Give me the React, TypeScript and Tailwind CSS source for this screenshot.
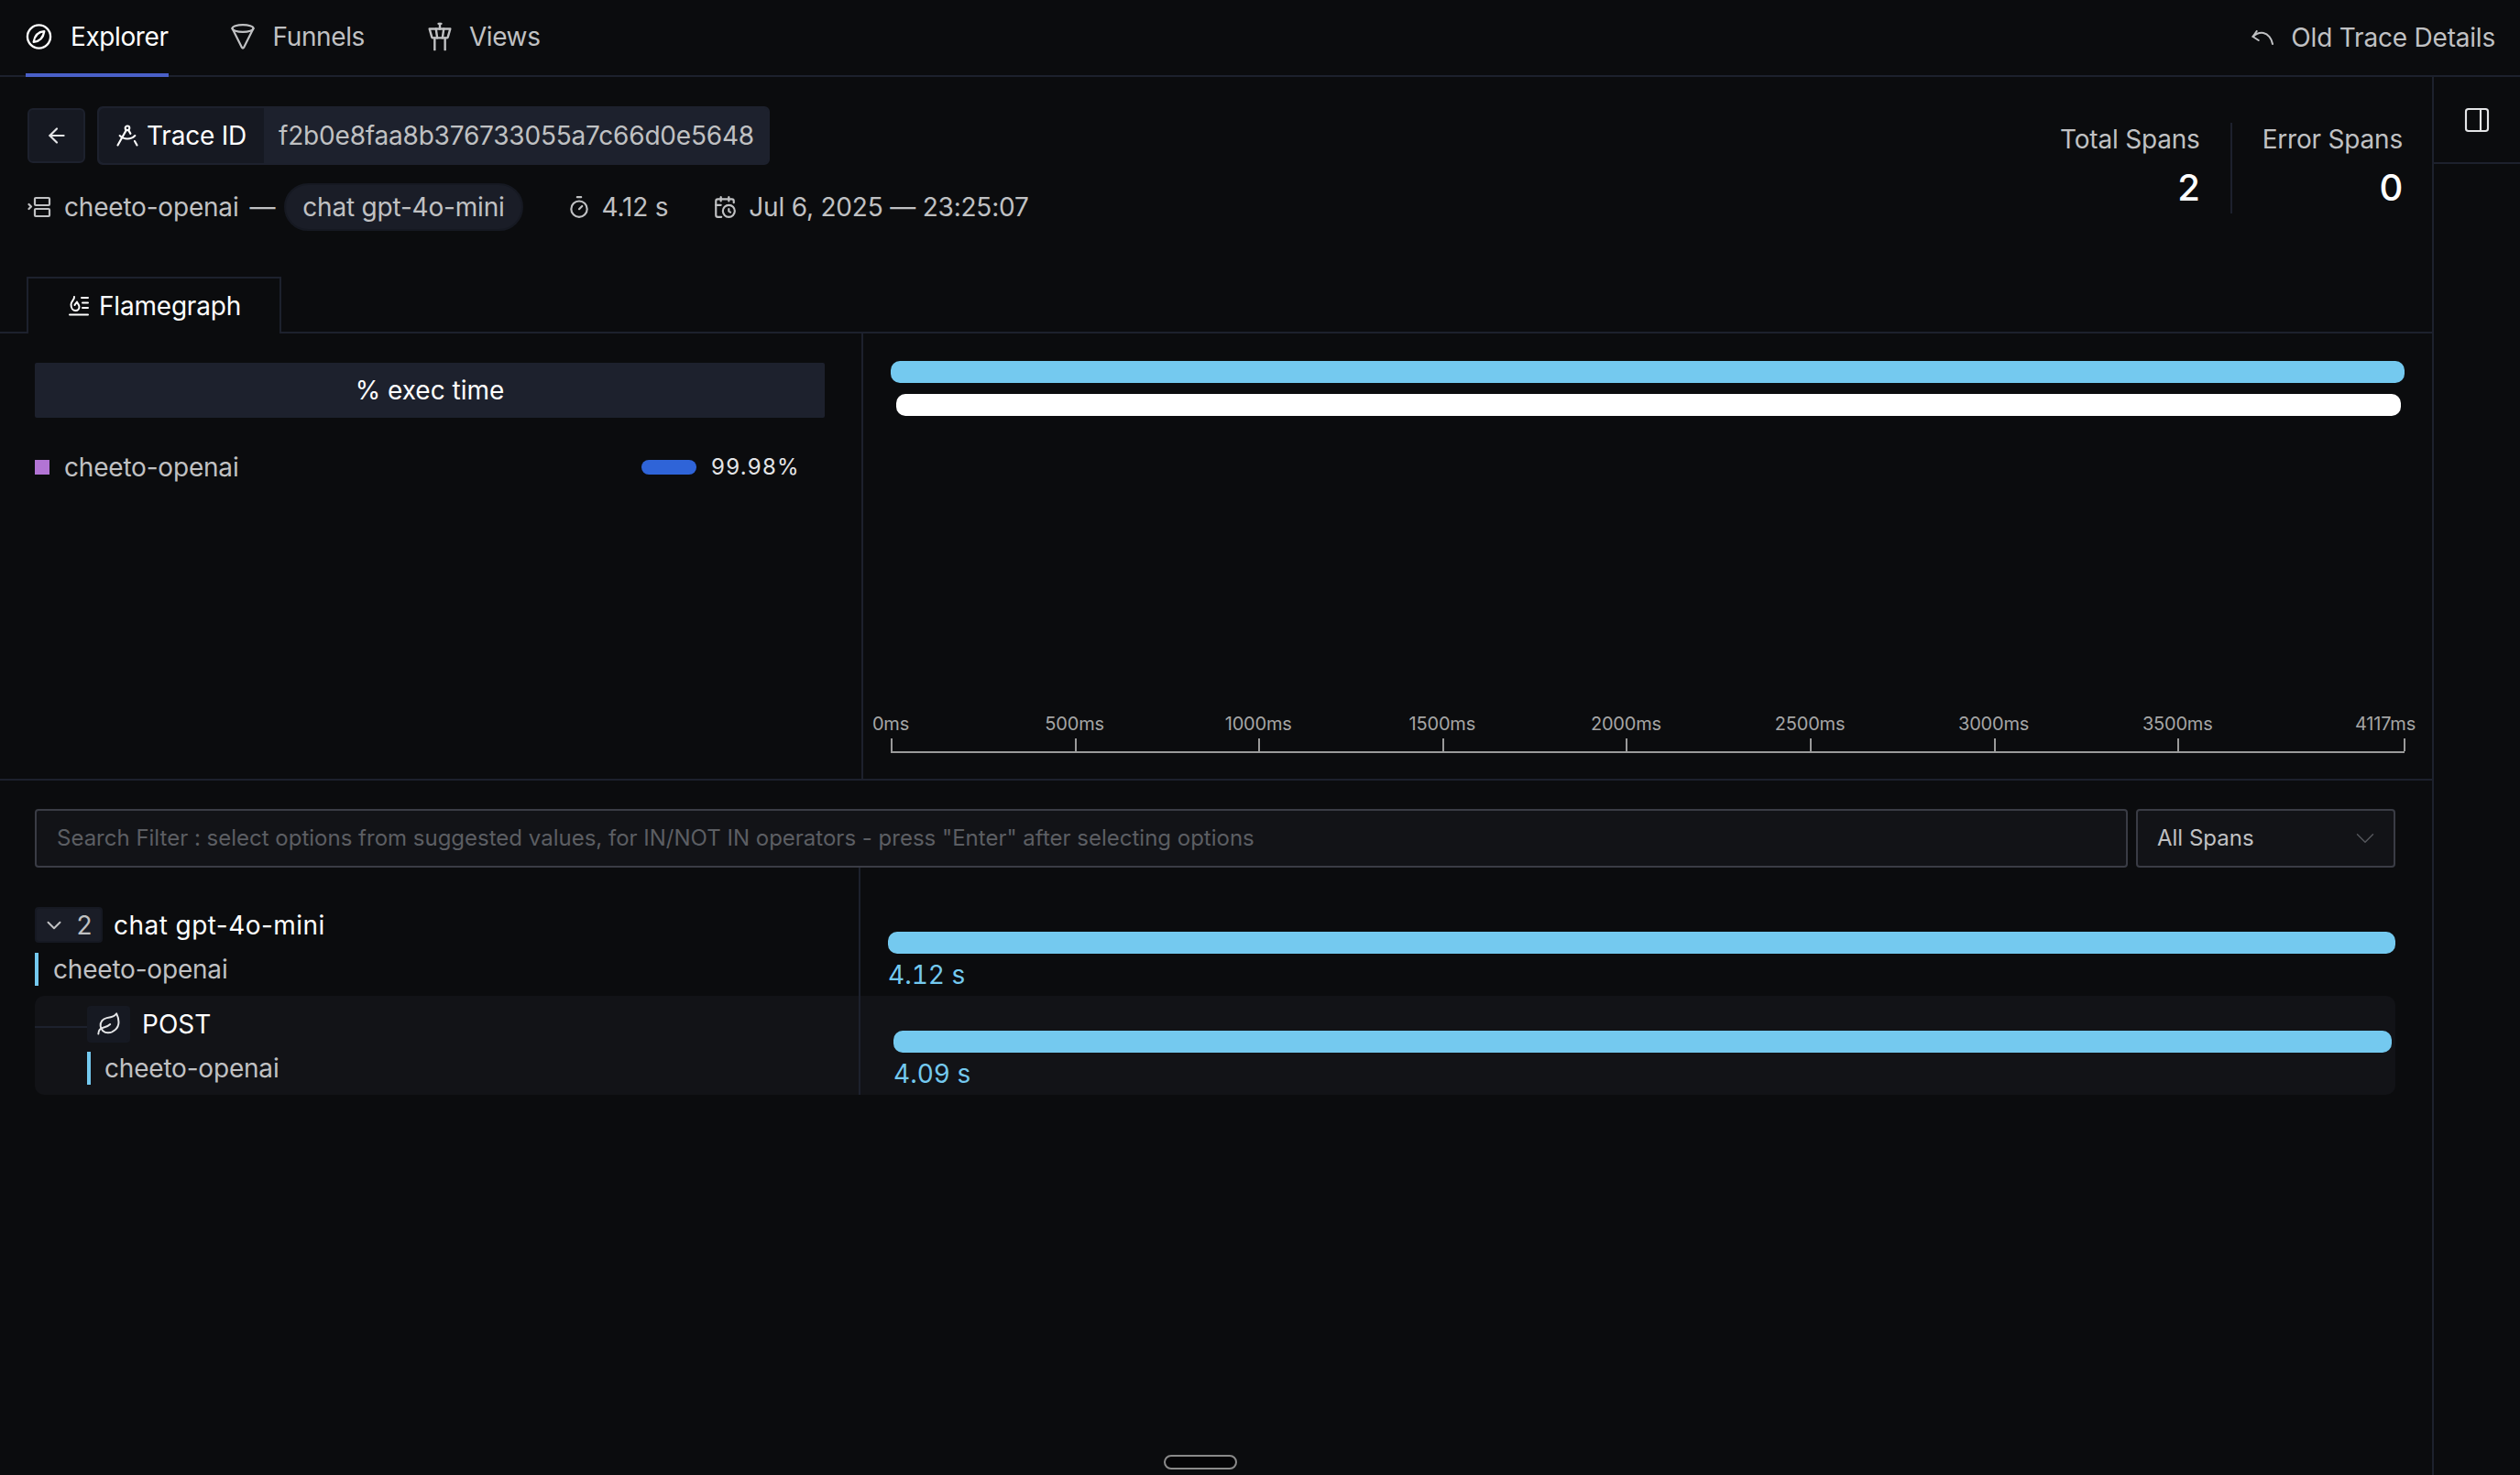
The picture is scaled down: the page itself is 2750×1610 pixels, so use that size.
import { ArrowLeft, CalendarClock, ChevronDown, DraftingCompass, Leaf, PanelRight, Timer, TowerControl } from "lucide-react";

const ticks = [
    { label: "0ms", x: 0, pos: "left-0 -translate-x-1/2" },
    { label: "500ms", x: 200.6, pos: "left-0 -translate-x-1/2" },
    { label: "1000ms", x: 401.2, pos: "left-0 -translate-x-1/2" },
    { label: "1500ms", x: 601.8, pos: "left-0 -translate-x-1/2" },
    { label: "2000ms", x: 802.4, pos: "left-0 -translate-x-1/2" },
    { label: "2500ms", x: 1003, pos: "left-0 -translate-x-1/2" },
    { label: "3000ms", x: 1203.6, pos: "left-0 -translate-x-1/2" },
    { label: "3500ms", x: 1404.2, pos: "left-0 -translate-x-1/2" },
    { label: "4117ms", x: 1651, pos: "right-[-13px]" },
];

function ExplorerIcon() {
    return (
        <svg width="29" height="30" viewBox="0 0 30 30" fill="none" stroke="currentColor" strokeWidth="2.4" strokeLinecap="round" strokeLinejoin="round">
            <circle cx="15" cy="15" r="13" />
            <path d="M21 9c-6 .5-10.500 3-12 12 6-.5 10.500-3 12-12Z" />
        </svg>
    )
}

function FunnelIcon() {
    return (
        <svg width="26" height="30" viewBox="0 0 26 30" fill="none" stroke="currentColor" strokeWidth="2.200" strokeLinecap="round" strokeLinejoin="round">
            <ellipse cx="13" cy="6" rx="11.500" ry="3.800" />
            <path d="M1.500 6 12 27a1.200 1.200 0 0 0 2 0L24.500 6" />
        </svg>
    )
}

function UndoIcon() {
    return (
        <svg width="24" height="16" viewBox="0 0 24 16" fill="none" stroke="currentColor" strokeWidth="2" strokeLinecap="round" strokeLinejoin="round">
            <path d="M5.700 1 1.500 7l6.200 4" />
            <path d="M1.500 7C6 3 10 2.500 13 3c5 1 9 6 10 12" />
        </svg>
    )
}

function ServiceIcon() {
    return (
        <svg width="26" height="24" viewBox="0 0 26 24" fill="none" stroke="currentColor" strokeWidth="2.2" strokeLinecap="round" strokeLinejoin="round">
            <path d="M1.500 9l2.500 2.500L1.500 14" />
            <rect x="8" y="2" width="16" height="8" rx="1" />
            <rect x="8" y="14" width="16" height="8" rx="1" />
        </svg>
    )
}

function FlameIcon() {
    return (
        <svg width="24" height="24" viewBox="0 0 24 24" fill="none" stroke="currentColor" strokeWidth="2" strokeLinecap="round" strokeLinejoin="round">
            <path d="M7 2c.5 3-3.500 4.500-3.500 8.500C3.500 14 5.500 17 8.500 17c2.500 0 4-2 4-4 0-2.500-2-3.500-2.500-5.500C9 9 8 10 7.500 11" />
            <path d="M15 3h7M16 8.500h6M16 14h6M2 21.500h20" />
        </svg>
    )
}

function Tab({ icon, label, active, className }: { icon: React.ReactNode; label: string; active?: boolean; className?: string }) {
    return (
        <div className={`flex items-center gap-[20px] h-[84px] -mb-[2px] border-b-[4px] tracking-[-0.4px] ${active ? "text-white border-[#4a60c8]" : "text-[#c0c1c3] border-transparent"} ${className ?? ""}`}>
            {icon}
            <span>{label}</span>
        </div>
    )
}

function Stat({ label, value, border }: { label: string; value: string; border?: boolean }) {
    return (
        <div className={`flex flex-col items-end h-[99px] ${border ? "border-r-2 border-[#1d212d] pr-[33px]" : "pl-[33px]"}`}>
            <span className="text-[#c0c1c3] text-[28px] leading-[36px]">{label}</span>
            <span className="text-white text-[40px] leading-[48px] font-medium mt-[11px]">{value}</span>
        </div>
    )
}

export default function App() {
    return (
        <div className="relative flex flex-col w-[2750px] h-[1610px] overflow-hidden bg-[#0b0c0e] text-[28px] tracking-[-0.2px] text-[#c0c1c3] font-['Inter',sans-serif]">
            {/* top tabs */}
            <div className="flex items-center justify-between h-[84px] shrink-0 pl-[28px] pr-[27px] border-b-2 border-[#1d212d]">
                <div className="flex">
                    <Tab active icon={<ExplorerIcon />} label="Explorer" />
                    <Tab className="ml-[68px]" icon={<FunnelIcon />} label="Funnels" />
                    <Tab className="ml-[70px]" icon={<TowerControl size={34} strokeWidth={1.7} className="-mx-[5px]" />} label="Views" />
                </div>
                <div className="flex items-center gap-[19px]">
                    <UndoIcon />
                    <span>Old Trace Details</span>
                </div>
            </div>

            <div className="flex flex-1 min-h-0">
                <div className="flex flex-col w-[2654px] border-r-2 border-[#1d212d] box-content">
                    {/* trace header */}
                    <div className="flex flex-col h-[280px] shrink-0 border-b-2 border-[#1d212d]">
                        <div className="flex justify-between pl-[30px] pr-[32px] pt-[32px]">
                            <div className="flex flex-col">
                                <div className="flex items-center gap-[13px] h-[64px]">
                                    <button className="flex items-center justify-center w-[63px] h-[60px] rounded-[6px] border-2 border-[#1d212d] bg-[#161922] text-[#e4e5e7]">
                                        <ArrowLeft size={26} strokeWidth={2} />
                                    </button>
                                    <div className="flex h-[64px] rounded-[6px] border-2 border-[#1d212d] bg-[#1d212d]">
                                        <div className="flex items-center gap-[7px] pl-[17px] pr-[19px] rounded-l-[6px] bg-[#161922] text-white">
                                            <DraftingCompass size={28} strokeWidth={1.8} />
                                            <span>Trace ID</span>
                                        </div>
                                        <div className="flex items-center pl-[16px] pr-[15px]">f2b0e8faa8b376733055a7c66d0e5648</div>
                                    </div>
                                </div>
                                <div className="flex items-center h-[52px] mt-[20px]">
                                    <span className="flex items-center gap-[14px]">
                                        <ServiceIcon />
                                        cheeto-openai
                                    </span>
                                    <span className="ml-[12px] mr-[10px]">—</span>
                                    <span className="flex items-center h-[52px] px-[18px] rounded-full border-2 border-[#161922] bg-[#1a1d27]">chat gpt-4o-mini</span>
                                    <span className="flex items-center gap-[12px] ml-[48px]">
                                        <Timer size={26} strokeWidth={2} />
                                        4.12 s
                                    </span>
                                    <span className="flex items-center gap-[13px] ml-[49px]">
                                        <CalendarClock size={26} strokeWidth={2} />
                                        Jul 6, 2025 — 23:25:07
                                    </span>
                                </div>
                            </div>
                            <div className="flex pt-[18px]">
                                <Stat border label="Total Spans" value="2" />
                                <Stat label="Error Spans" value="0" />
                            </div>
                        </div>
                        <div className="flex items-center gap-[10px] w-[278px] h-[62px] mt-auto -mb-[2px] ml-[29px] pl-[43px] text-white bg-[#0b0c0e] border-2 border-b-0 border-[#1d212d]">
                            <FlameIcon />
                            <span>Flamegraph</span>
                        </div>
                    </div>

                    {/* flamegraph */}
                    <div className="flex h-[488px] shrink-0 border-b-2 border-[#1d212d]">
                        <div className="flex flex-col w-[942px] shrink-0 border-r-2 border-[#1d212d] pl-[38px] pr-[40px] pt-[32px]">
                            <div className="flex items-center justify-center h-[60px] rounded-[2px] bg-[#1d212d] text-white tracking-normal">% exec time</div>
                            <div className="flex items-center h-[32px] mt-[38px]">
                                <span className="w-[16px] h-[16px] bg-[#b274d4]" />
                                <span className="ml-[16px]">cheeto-openai</span>
                                <span className="ml-auto w-[60px] h-[16px] rounded-full bg-[#2f64d8]" />
                                <span className="ml-[16px] mr-[27px] text-[24px] tracking-[1.3px] text-[#e4e5e7]">99.98%</span>
                            </div>
                        </div>
                        <div className="flex flex-col flex-1 pl-[30px] pt-[30px]">
                            <div className="w-[1652px] h-[24px] rounded-[10px] bg-[#74c9ef]" />
                            <div className="w-[1642px] h-[24px] ml-[6px] mt-[12px] rounded-[10px] bg-white" />
                            <div className="relative w-[1652px] h-[44px] mt-auto mb-[28px] text-[20px] text-[#a5a5a5] border-b-2 border-[#9a9a9a]">
                                {ticks.map((t) => (
                                    <div key={t.label} className="absolute top-0 bottom-0 w-0" style={{ left: t.x }}>
                                        <span className={`absolute top-0 leading-[24px] whitespace-nowrap ${t.pos}`}>{t.label}</span>
                                        <span className="absolute bottom-0 left-0 w-[2px] h-[14px] bg-[#9a9a9a]" />
                                    </div>
                                ))}
                            </div>
                        </div>
                    </div>

                    {/* search */}
                    <div className="flex gap-[9px] h-[64px] shrink-0 ml-[38px] mr-[40px] mt-[31px] text-[24px] tracking-normal">
                        <div className="flex items-center flex-1 pl-[22px] rounded-[4px] border-2 border-[#3a3c45] bg-[#121317] text-[#5c5e63]">
                            Search Filter : select options from suggested values, for IN/NOT IN operators - press "Enter" after selecting options
                        </div>
                        <div className="flex items-center justify-between w-[283px] pl-[21px] pr-[22px] rounded-[4px] border-2 border-[#3a3c45] bg-[#121317]">
                            <span>All Spans</span>
                            <ChevronDown size={34} strokeWidth={1} className="-mr-[8px] text-[#55575c]" />
                        </div>
                    </div>

                    {/* span tree */}
                    <div className="flex h-[248px] shrink-0 ml-[38px] mr-[40px]">
                        <div className="flex flex-col w-[901px] shrink-0 border-r-2 border-[#1d212d]">
                            <div className="flex flex-col h-[140px] pt-[43px]">
                                <div className="flex items-center h-[39px]">
                                    <span className="flex items-center justify-center gap-[12px] w-[74px] h-[39px] rounded-[4px] border-2 border-[#161922] bg-[#1a1d27]">
                                        <ChevronDown size={26} strokeWidth={1.8} className="-ml-[4px]" />
                                        2
                                    </span>
                                    <span className="ml-[12px] text-white tracking-[0.45px]">chat gpt-4o-mini</span>
                                </div>
                                <div className="flex items-center h-[36px] mt-[11px] border-l-4 border-[#74c9ef] pl-[16px]">cheeto-openai</div>
                            </div>
                            <div className="relative flex flex-col flex-1 pl-[57px] pt-[11px] rounded-l-[10px] bg-[#121317]">
                                <span className="absolute left-0 top-[33px] w-[57px] h-[2px] bg-[#1d212d]" />
                                <div className="flex items-center h-[40px]">
                                    <span className="flex items-center justify-center w-[47px] h-[40px] rounded-[4px] border-2 border-[#161922] bg-[#161922] text-[#e4e5e7]">
                                        <Leaf size={28} strokeWidth={1.7} />
                                    </span>
                                    <span className="ml-[13px] text-white tracking-normal">POST</span>
                                </div>
                                <div className="flex items-center h-[36px] mt-[10px] border-l-4 border-[#74c9ef] pl-[15px]">cheeto-openai</div>
                            </div>
                        </div>
                        <div className="flex flex-col flex-1 min-w-0">
                            <div className="flex flex-col h-[140px] pl-[30px] pt-[70px]">
                                <div className="h-[24px] rounded-[10px] bg-[#74c9ef]" />
                                <span className="mt-[8px] leading-[30px] text-[#74c9ef] tracking-normal tabular-nums">4.12 s</span>
                            </div>
                            <div className="flex flex-col flex-1 pl-[36px] pr-[4px] pt-[38px] rounded-r-[10px] bg-[#121317]">
                                <div className="h-[24px] rounded-[10px] bg-[#74c9ef]" />
                                <span className="mt-[8px] leading-[30px] text-[#74c9ef] tracking-normal tabular-nums">4.09 s</span>
                            </div>
                        </div>
                    </div>
                </div>

                {/* right rail */}
                <div className="flex-1">
                    <div className="flex items-center justify-center h-[95px] border-b-2 border-[#1d212d] text-[#e4e5e7]">
                        <PanelRight size={32} strokeWidth={1.6} />
                    </div>
                </div>
            </div>

            {/* resize handle */}
            <div className="absolute left-[1270px] top-[1588px] w-[80px] h-[16px] rounded-full border-2 border-[#8a8a8a] bg-[#050507]" />
        </div>
    )
}
